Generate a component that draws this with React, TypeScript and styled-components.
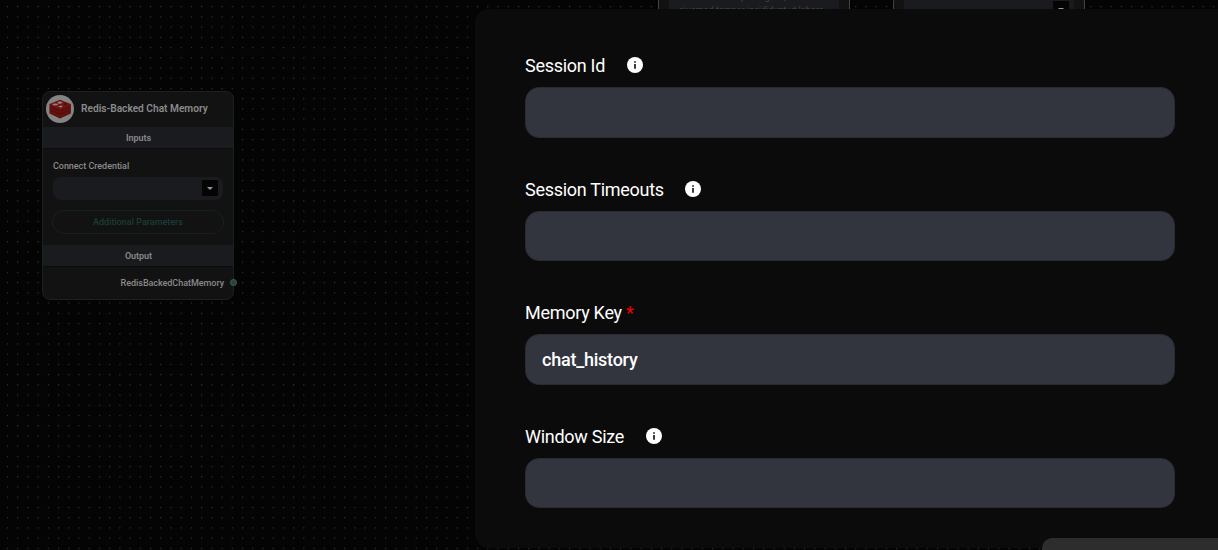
import React from 'react';
import styled, { createGlobalStyle } from 'styled-components';

const GlobalStyle = createGlobalStyle`
  * { box-sizing: border-box; }
  html, body { margin: 0; padding: 0; background: #040404; }
  body { font-family: Roboto, "Liberation Sans", sans-serif; overflow: hidden; }
`;

const Canvas = styled.main`
  position: relative;
  width: 1218px;
  height: 550px;
  overflow: hidden;
  background-color: #040404;
`;

const DotGrid = styled.svg`
  position: absolute;
  inset: 0;
  width: 100%;
  height: 100%;
`;

const Node = styled.section<{ $x: number; $y: number; $h: number; $edge: string }>`
  position: absolute;
  left: ${p => p.$x}px;
  top: ${p => p.$y}px;
  width: 192px;
  height: ${p => p.$h}px;
  display: flex;
  flex-direction: column;
  border: 1px solid ${p => p.$edge};
  border-radius: 8px;
  background: #121212;
  color: #8a8a8a;
`;

const NodeHeader = styled.header`
  display: flex;
  align-items: center;
  gap: 7px;
  height: 35px;
  padding: 0 3px 2px;
`;

const NodeTitle = styled.h2`
  margin: 0;
  font-size: 10.2px;
  font-weight: 600;
  line-height: 14px;
  letter-spacing: -0.02px;
  white-space: nowrap;
`;

const Band = styled.h3`
  margin: 0;
  height: 22px;
  display: flex;
  align-items: center;
  justify-content: center;
  padding-left: 1px;
  background: #1a1b1f;
  border-bottom: 1px solid #0c0c0c;
  font-size: 9px;
  font-weight: 600;
  letter-spacing: -0.04px;
`;

const NodeBody = styled.div`
  display: flex;
  flex-direction: column;
  height: 96px;
  padding: 11px 10px 0;
`;

const SmallLabel = styled.label`
  font-size: 9px;
  line-height: 12px;
  font-weight: 500;
  letter-spacing: -0.04px;
`;

const Select = styled.div`
  display: flex;
  align-items: center;
  justify-content: flex-end;
  flex: none;
  width: 170px;
  height: 23px;
  margin-top: 5px;
  padding: 0 5px 1px 0;
  border-radius: 8px;
  background: #1a1b1f;
`;

const SelectArrow = styled.span`
  width: 16px;
  height: 16px;
  display: flex;
  align-items: center;
  justify-content: center;
  background: #040404;
  &::after {
    content: '';
    border: 3px solid transparent;
    border-top-color: #969696;
    border-bottom: 0;
  }
`;

const OutlineButton = styled.button`
  flex: none;
  width: 172px;
  height: 24px;
  margin: 10px 0 0 -1px;
  padding: 0;
  border: 1px solid #14221f;
  border-radius: 12px;
  background: transparent;
  color: #1a3d37;
  font: 500 9px Roboto, sans-serif;
`;

const Output = styled.div`
  flex: 1;
  display: flex;
  align-items: center;
  justify-content: flex-end;
  gap: 6px;
  margin-right: -4px;
  padding-bottom: 1px;
  font-size: 9px;
  letter-spacing: -0.04px;
  font-weight: 500;
`;

const Port = styled.i`
  width: 7px;
  height: 7px;
  border: 1px solid #4b5a58;
  border-radius: 50%;
  background: #23443f;
`;

const ClippedArea = styled.div`
  width: 170px;
  height: 36px;
  margin: 0 10px;
  padding: 0 10px;
  background: #1a1b1f;
  color: #444548;
  font-size: 9px;
  line-height: 13px;
  white-space: nowrap;
`;

const ClippedSelect = styled.div`
  display: flex;
  justify-content: flex-end;
  width: 170px;
  height: 24px;
  margin: 0 10px;
  padding: 6px 5px 0 0;
  border-radius: 8px;
  background: #1a1b1f;
`;

const Dialog = styled.section`
  position: absolute;
  left: 475px;
  top: 9px;
  width: 760px;
  height: 539px;
  display: flex;
  flex-direction: column;
  gap: 39px;
  padding: 44px 60px 0 50px;
  border-radius: 14px;
  background: #0b0b0b;
`;

const Field = styled.div`
  display: flex;
  flex-direction: column;
  gap: 9px;
`;

const FieldHeading = styled.div`
  display: flex;
  align-items: center;
  gap: 21.6px;
  height: 25px;
`;

const FieldLabel = styled.label`
  color: #fff;
  font-size: 18px;
  line-height: 25px;
  letter-spacing: -0.28px;
  white-space: nowrap;
`;

const Required = styled.span`
  color: #f00000;
  font-weight: 500;
`;

const TextInput = styled.input`
  width: 650px;
  height: 50.6px;
  padding: 0 16px;
  border: 1px solid #292b30;
  border-radius: 14px;
  outline: none;
  background: #32353e;
  color: #fff;
  font: 500 18px Roboto, sans-serif;
  letter-spacing: -0.24px;
`;

const InfoGlyph = styled.svg`
  flex: none;
  margin-bottom: 1px;
`;

const Toast = styled.aside`
  position: absolute;
  left: 1042px;
  top: 538px;
  width: 190px;
  height: 40px;
  border-radius: 10px;
  background: #2d2d2d;
`;

function InfoIcon() {
  return (
    <InfoGlyph width="16" height="16" viewBox="0 0 16 16" aria-label="More information">
      <circle cx="8" cy="8" r="8" fill="#fff" />
      <path d="M7.2 4.2h1.6v1.6H7.2zM7.2 7.1h1.6v4.7H7.2z" fill="#0b0b0b" />
    </InfoGlyph>
  );
}

function RedisIcon() {
  return (
    <svg width="28" height="28" viewBox="0 0 28 28" aria-label="Redis">
      <circle cx="14" cy="14" r="14" fill="#848484" />
      <path d="M3.6 9v9.6L14 23.4l10.8-4.8V9L14 14z" fill="#540e0b" />
      <path d="M3.6 15.6 14 20.2l10.8-4.6v2L14 22.2 3.6 17.6zM3.6 12 14 16.6 24.8 12v1.7L14 18.3 3.6 13.7z" fill="#68130f" />
      <path d="M3.6 9 14 4.8 24.8 9v1.4L14 15 3.6 10.4z" fill="#6f1410" />
      <path d="m11 6.7 2 .4 1-1 .8 1 2.4.1-2 .9.4 1-2-.6-1.9.5.5-1zM11.7 11.3l5-.9-1.5 2.3z" fill="#8b8b8b" />
      <ellipse cx="9.3" cy="9.5" rx="2.8" ry="1" fill="#858585" />
      <path d="m18.7 7.8 3 1.2-3 1.2z" fill="#4d0b08" />
    </svg>
  );
}

const fields = [
  { id: 'session-id', label: 'Session Id', info: true, value: '' },
  { id: 'session-timeouts', label: 'Session Timeouts', info: true, value: '' },
  { id: 'memory-key', label: 'Memory Key', required: true, value: 'chat_history' },
  { id: 'window-size', label: 'Window Size', info: true, value: '' },
];

export default function App() {
  return (
    <>
      <GlobalStyle />
      <Canvas>
        <DotGrid aria-hidden="true">
          <defs>
            <pattern id="dots" x="6.9" y="6.1" width="10.22" height="10.22" patternUnits="userSpaceOnUse">
              <circle cx=".6" cy=".6" r=".6" fill="#424242" />
            </pattern>
          </defs>
          <rect width="100%" height="100%" fill="url(#dots)" />
        </DotGrid>

        <Node $x={658} $y={-10} $h={60} $edge="#444">
          <ClippedArea>
            consectetur adipiscing elit, sed do<br />eiusmod tempor incididunt ut labore
          </ClippedArea>
        </Node>
        <Node $x={893} $y={-6} $h={60} $edge="#444">
          <ClippedSelect><SelectArrow /></ClippedSelect>
        </Node>

        <Node $x={42} $y={91} $h={209} $edge="#15241f">
          <NodeHeader><RedisIcon /><NodeTitle>Redis-Backed Chat Memory</NodeTitle></NodeHeader>
          <Band>Inputs</Band>
          <NodeBody>
            <SmallLabel>Connect Credential</SmallLabel>
            <Select><SelectArrow /></Select>
            <OutlineButton>Additional Parameters</OutlineButton>
          </NodeBody>
          <Band>Output</Band>
          <Output>RedisBackedChatMemory<Port /></Output>
        </Node>

        <Dialog role="dialog">
          {fields.map(f => (
            <Field key={f.id}>
              <FieldHeading>
                <FieldLabel htmlFor={f.id}>{f.label}{f.required && <Required> *</Required>}</FieldLabel>
                {f.info && <InfoIcon />}
              </FieldHeading>
              <TextInput id={f.id} defaultValue={f.value} />
            </Field>
          ))}
        </Dialog>
        <Toast />
      </Canvas>
    </>
  );
}
